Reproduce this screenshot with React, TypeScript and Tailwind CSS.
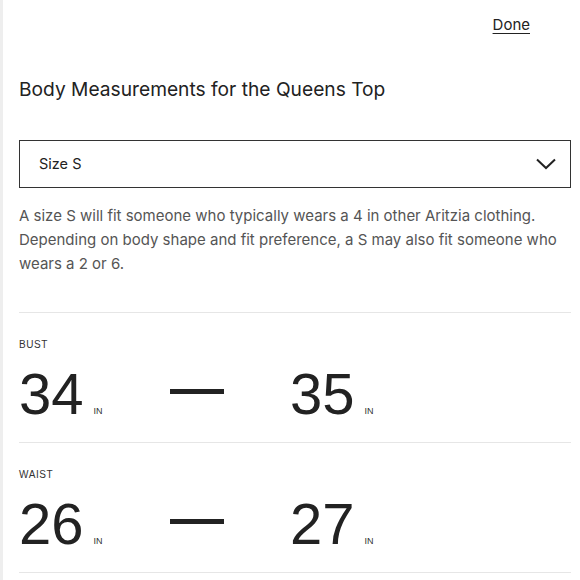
const body = { fontFamily: "Inter, 'Open Sans', sans-serif" };
const nums = { fontFamily: "'Liberation Sans', Arial, sans-serif" };

function Measurement({ label, low, high }: { label: string; low: string; high: string }) {
  return (
    <div className="border-t border-[#e6e6e6] pt-[26px] pb-[19px]">
      <div className="text-[10px] leading-[12px] tracking-[0.06em] text-[#333]" style={nums}>
        {label}
      </div>
      <div className="mt-[14px] flex items-center text-[#222]" style={nums}>
        <div className="flex w-[151px] items-baseline">
          <span className="text-[58px] leading-[58px]">{low}</span>
          <span className="ml-[10px] text-[9px] text-[#333]">IN</span>
        </div>
        <div className="mb-[6px] h-[5px] w-[54px] bg-[#222]" />
        <div className="ml-[66px] flex items-baseline">
          <span className="text-[58px] leading-[58px]">{high}</span>
          <span className="ml-[10px] text-[9px] text-[#333]">IN</span>
        </div>
      </div>
    </div>
  );
}

export default function App() {
  return (
    <div
      className="h-[580px] w-[580px] overflow-hidden border-l-[3px] border-[#eeeeee] bg-white pl-[16px] pr-[9px] text-[#222]"
      style={body}
    >
      <div className="flex justify-end pt-[15px]">
        <a className="mr-[41px] text-[15px] leading-[20px] underline underline-offset-[3px]">Done</a>
      </div>

      <h2 className="mt-[42px] text-[19.2px] leading-[24px] font-normal">
        Body Measurements for the Queens Top
      </h2>

      <button className="mt-[39px] flex h-[48px] w-full items-center justify-between border border-[#333] pl-[19px] pr-[14px]">
        <span className="text-[14.5px]">Size S</span>
        <svg width="20" height="12" viewBox="0 0 20 12" fill="none">
          <polyline points="1,1.5 10,10 19,1.5" stroke="#222" strokeWidth="2" />
        </svg>
      </button>

      <p className="mt-[16px] text-[15px] leading-[24px] text-[#555]">
        A size S will fit someone who typically wears a 4 in other Aritzia clothing. Depending on body
        shape and fit preference, a S may also fit someone who wears a 2 or 6.
      </p>

      <div className="mt-[36px]">
        <Measurement label="BUST" low="34" high="35" />
        <Measurement label="WAIST" low="26" high="27" />
        <div className="border-t border-[#e6e6e6]" />
      </div>
    </div>
  );
}
